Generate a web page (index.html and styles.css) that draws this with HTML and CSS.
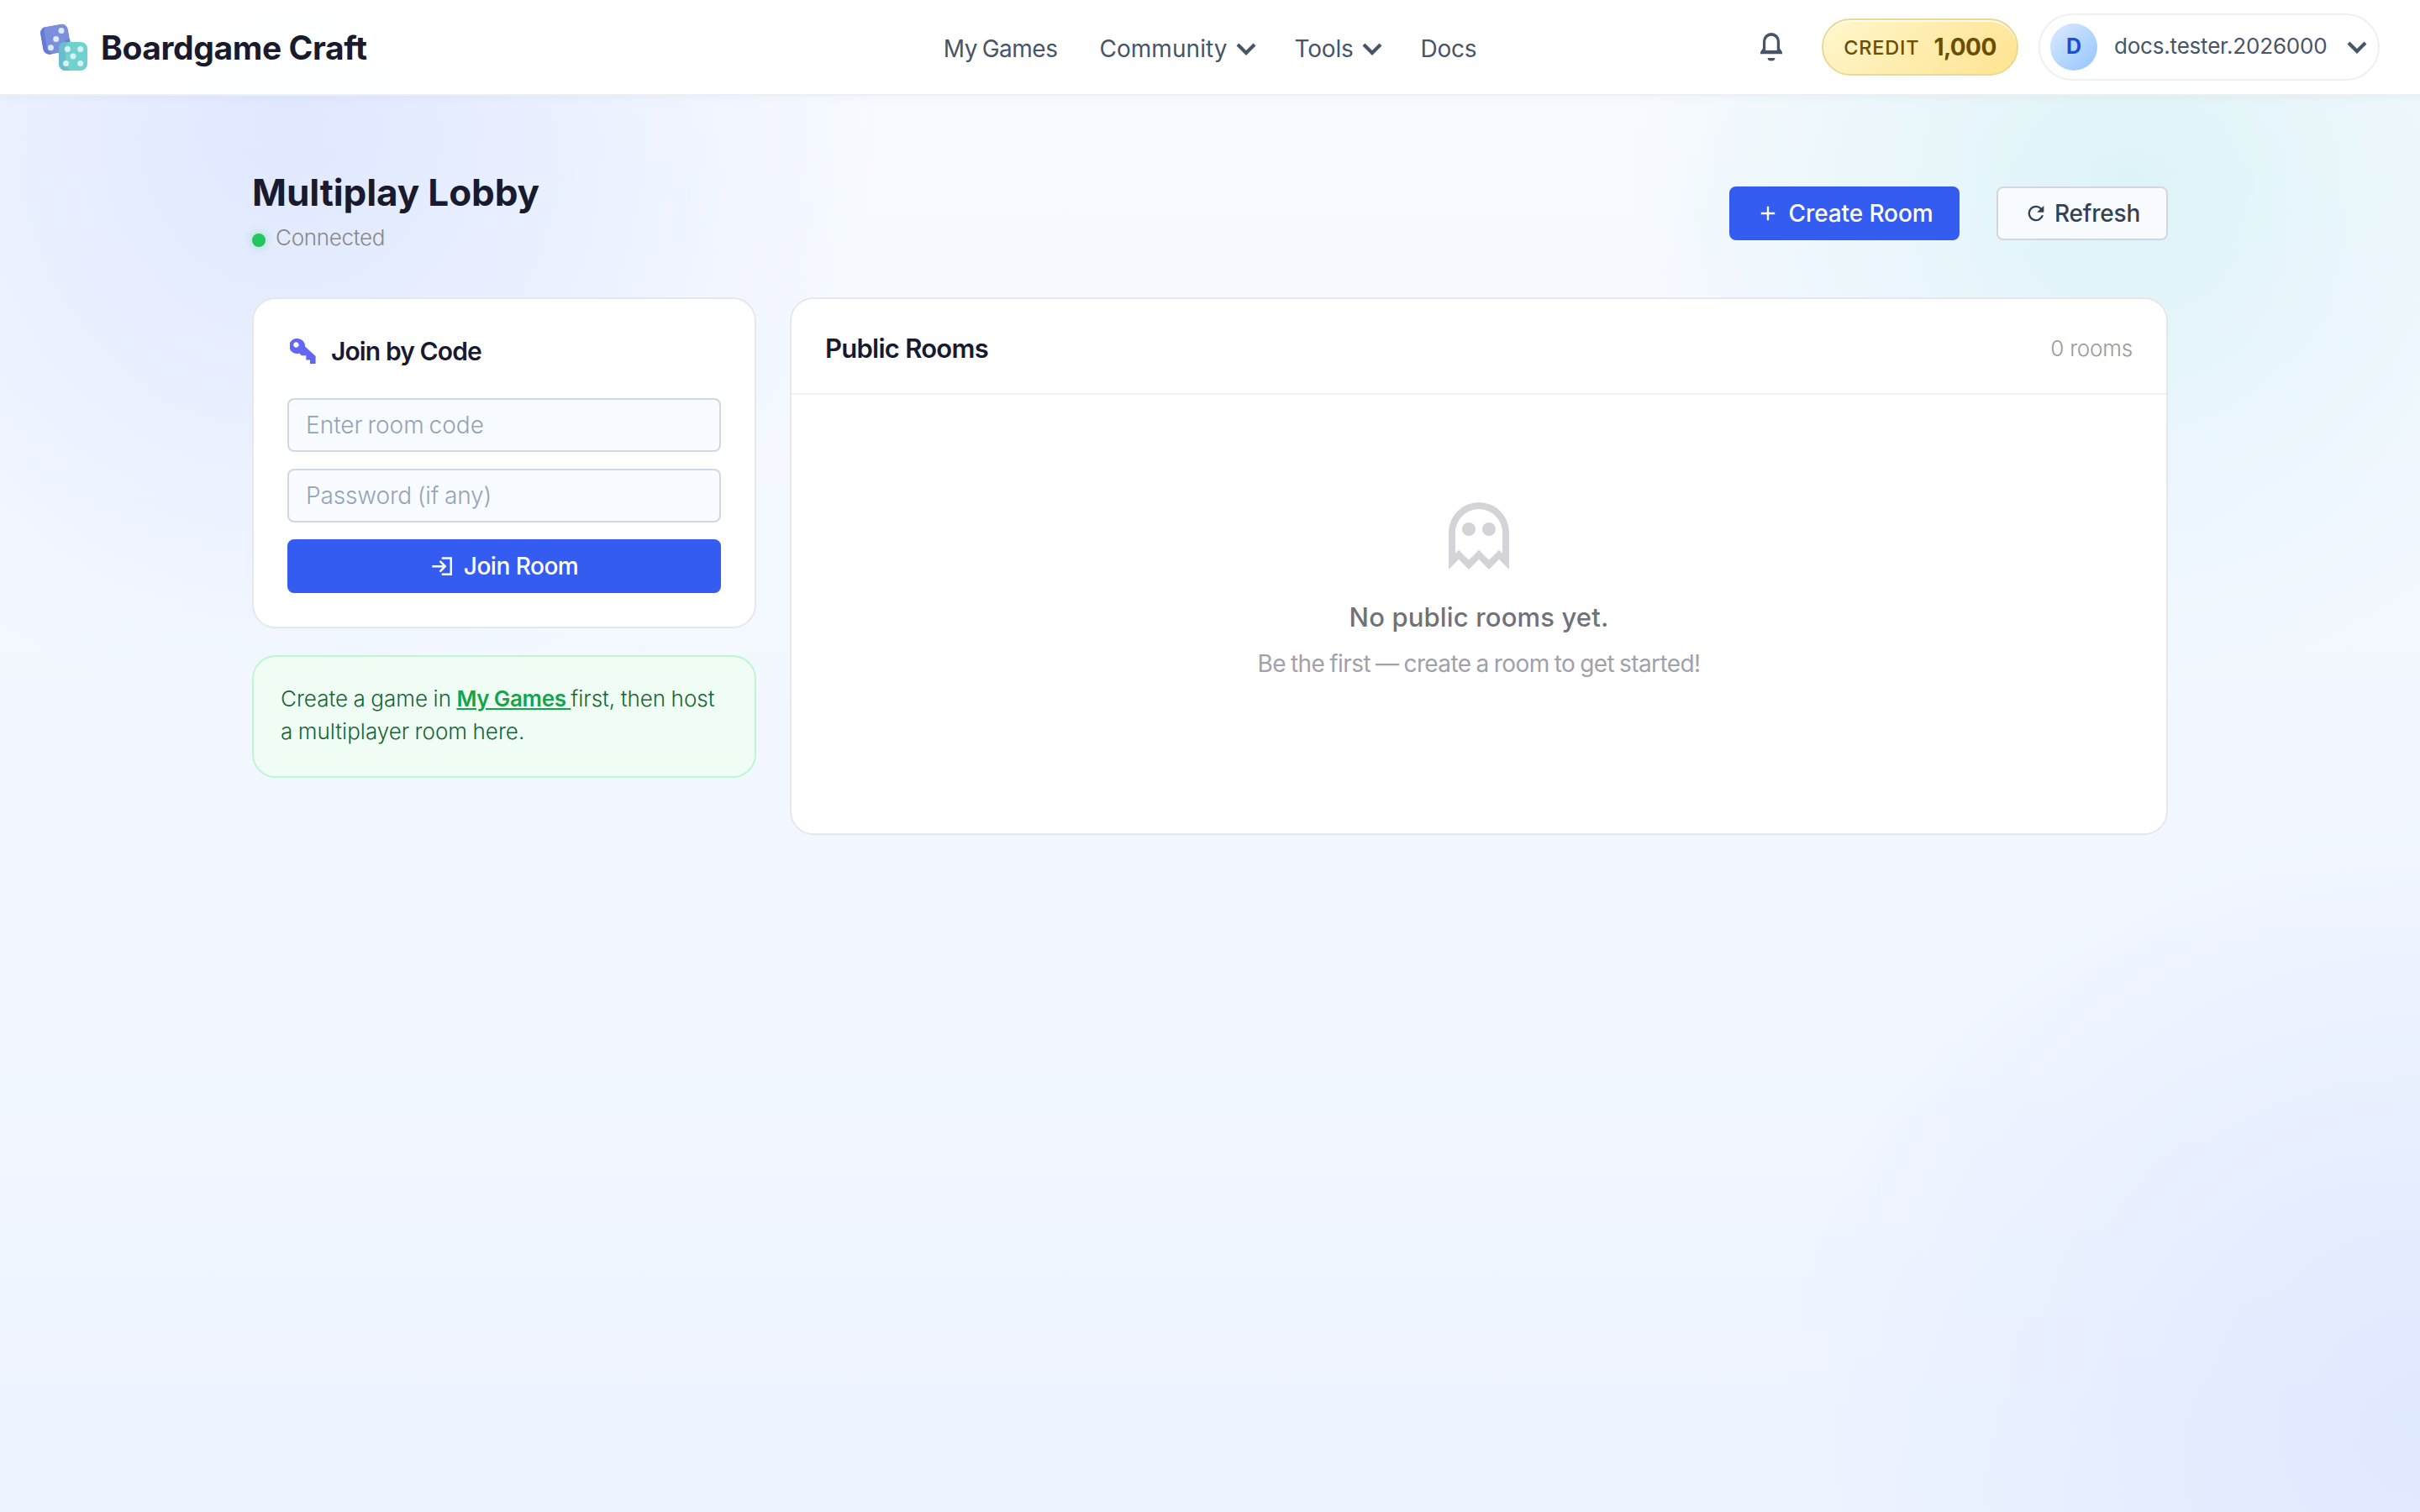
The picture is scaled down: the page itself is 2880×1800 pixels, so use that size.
FILE: index.html
```html
<!DOCTYPE html>
<html lang="en">
<head>
    <meta charset="UTF-8">
    <meta name="viewport" content="width=device-width, initial-scale=1.0">
    <title>Multiplay Lobby - Boardgame Craft</title>
    <link rel="stylesheet" href="styles.css">
</head>
<body>

<header class="navbar">
    <a href="#" class="brand">
        <svg class="brand-logo" viewBox="0 0 56 56">
            <defs>
                <clipPath id="dieLeft"><rect x="1.4" y="2" width="33.4" height="33.4" rx="8"/></clipPath>
                <clipPath id="dieRight"><rect x="22" y="22" width="34" height="34" rx="8"/></clipPath>
            </defs>
            <g transform="rotate(-10 18.1 18.7)" clip-path="url(#dieLeft)">
                <rect x="1.4" y="2" width="33.4" height="33.4" fill="#7b8fdd"/>
                <path d="M1.4 2h6.6q-1.6 3-1.6 8v14q0 8 6 11.4H1.4z" fill="#667bd6"/>
                <circle cx="36" cy="38" r="17" fill="#6a7fd6"/>
            </g>
            <g fill="#dcebf7">
                <circle cx="25" cy="8.4" r="3.5"/>
                <circle cx="18.7" cy="18.5" r="3.5"/>
                <circle cx="12.4" cy="28.7" r="3.5"/>
            </g>
            <g clip-path="url(#dieRight)">
                <rect x="22" y="22" width="34" height="34" fill="#6fd2cc"/>
                <path d="M22 22h11q-3 3-3 9v14q0 7 6 11H22z" fill="#6cbccd"/>
            </g>
            <g fill="#d8f1f5">
                <circle cx="32.3" cy="30.4" r="3.5"/>
                <circle cx="47.7" cy="30.4" r="3.5"/>
                <circle cx="39" cy="39" r="3.5"/>
                <circle cx="30.5" cy="47.6" r="3.5"/>
                <circle cx="47.7" cy="47.6" r="3.5"/>
            </g>
        </svg>
        <span class="brand-name">Boardgame Craft</span>
    </a>

    <nav class="nav">
        <a href="#" class="nav-link nav-games">My Games</a>
        <a href="#" class="nav-link nav-community">Community
            <svg class="chevron" viewBox="0 0 28 28"><path d="M4 9l10 10L24 9"/></svg>
        </a>
        <a href="#" class="nav-link nav-tools">Tools
            <svg class="chevron" viewBox="0 0 28 28"><path d="M4 9l10 10L24 9"/></svg>
        </a>
        <a href="#" class="nav-link nav-docs">Docs</a>
    </nav>

    <div class="account">
        <svg class="bell" viewBox="0 0 26 34">
            <path fill-rule="evenodd" d="M13 0a10 10 0 0 1 10 10v8.500l3 4.500v2.300H0V23l3-4.500V10A10 10 0 0 1 13 0zM13 3.800A6.800 6.800 0 0 0 6.200 10.600V21h13.600V10.600A6.800 6.800 0 0 0 13 3.800z"/>
            <path d="M8.600 30h8.800a4.400 3.600 0 0 1-8.800 0z"/>
        </svg>
        <div class="credit">
            <span class="credit-label">CREDIT</span>
            <span class="credit-value">1,000</span>
        </div>
        <div class="user">
            <span class="avatar">D</span>
            <span class="user-name">docs.tester.2026000</span>
            <svg class="chevron" viewBox="0 0 28 28"><path d="M4 9l10 10L24 9"/></svg>
        </div>
    </div>
</header>

<main class="lobby">
    <div class="lobby-head">
        <div class="lobby-title">
            <h1>Multiplay Lobby</h1>
            <div class="status"><span class="dot"></span>Connected</div>
        </div>
        <div class="actions">
            <button class="button button-primary button-create">
                <svg class="icon" viewBox="0 0 24 24"><path d="M11 11V5h2v6h6v2h-6v6h-2v-6H5v-2z"/></svg>
                Create Room
            </button>
            <button class="button button-refresh">
                <svg class="icon" viewBox="0 0 24 24"><path d="M17.650 6.350A7.960 7.960 0 0 0 12 4a8 8 0 1 0 7.730 10h-2.080A6 6 0 1 1 12 6c1.660 0 3.140.69 4.220 1.780L13 11h7V4z"/></svg>
                Refresh
            </button>
        </div>
    </div>

    <div class="lobby-grid">
        <aside class="side">
            <section class="card join">
                <h2>
                    <svg class="key" viewBox="0 0 31 30">
                        <path fill-rule="evenodd" d="M9 0a9 9 0 0 1 9 9.500L30.600 21v9H24v-4.600h-4.700v-5.100H14L11 17.500A9 9 0 1 1 9 0zM7.400 4.300a3.200 3.200 0 1 0 .01 0z"/>
                    </svg>
                    Join by Code
                </h2>
                <input type="text" class="field field-code" placeholder="Enter room code">
                <input type="text" class="field field-password" placeholder="Password (if any)">
                <button class="button button-primary button-join">
                    <svg class="icon icon-line" viewBox="0 0 28 28"><path d="M13.800 4.500h10.900v19.300H13.800M2.300 14.200h15.500M11.500 7.800l6.300 6.400-6.300 6.400"/></svg>
                    Join Room
                </button>
            </section>

            <p class="tip">Create a game in <a href="#">My Games </a>first, then host a multiplayer room here.</p>
        </aside>

        <section class="card rooms">
            <div class="rooms-head">
                <h2>Public Rooms</h2>
                <span class="rooms-count">0 rooms</span>
            </div>
            <div class="empty">
                <svg class="ghost" viewBox="0 0 24 24">
                    <path fill-rule="evenodd" d="M12 2a9 9 0 0 1 9 9v11l-3-3-3 3-3-3-3 3-3-3-3 3V11a9 9 0 0 1 9-9zm0 2a7 7 0 0 0-7 7v6.170l1-1 3 3 3-3 3 3 3-3 1 1V11a7 7 0 0 0-7-7z"/>
                    <circle cx="9" cy="10" r="2"/>
                    <circle cx="15" cy="10" r="2"/>
                </svg>
                <p class="empty-title">No public rooms yet.</p>
                <p class="empty-text">Be the first — create a room to get started!</p>
            </div>
        </section>
    </div>
</main>

</body>
</html>
```
FILE: styles.css
```css
* {
    box-sizing: border-box;
}

body {
    margin: 0;
    min-height: 100vh;
    font-family: 'Inter', sans-serif;
    font-size: 28px;
    color: #1a1a2e;
    background:
        radial-gradient(circle at 12% 8%, rgba(90, 125, 255, 0.15), transparent 700px),
        radial-gradient(circle at 88% 12%, rgba(45, 195, 185, 0.12), transparent 600px),
        radial-gradient(circle at 100% 94%, rgba(85, 125, 250, 0.1), transparent 760px),
        linear-gradient(180deg, #f8fbff 0%, #eef4ff 100%);
}

a {
    color: inherit;
    text-decoration: none;
}

h1, h2, p {
    margin: 0;
}

/* Navbar */
.navbar {
    display: grid;
    grid-template-columns: 1fr auto 1fr;
    align-items: center;
    height: 114px;
    padding: 0 48px;
    background: rgba(255, 255, 255, 0.97);
    border-bottom: 2px solid #eeeff1;
    box-shadow: 0 2px 12px rgba(15, 23, 42, 0.04);
}

.brand {
    display: flex;
    align-items: center;
    gap: 16px;
}

.brand-logo {
    width: 56px;
    height: 56px;
}

.brand-name {
    font-size: 39px;
    font-weight: 650;
    letter-spacing: -0.4px;
}

.nav {
    display: flex;
    gap: 44px;
    padding-top: 4px;
    color: #475569;
}

.nav-link {
    display: flex;
    align-items: center;
    gap: 8px;
    font-weight: 440;
}

.nav-games {
    margin-right: 6px;
    letter-spacing: -0.5px;
    word-spacing: -1.7px;
}

.nav-community {
    letter-spacing: 0.05px;
}

.nav-tools {
    letter-spacing: -0.2px;
}

.nav-docs {
    letter-spacing: -0.3px;
}

.chevron {
    width: 28px;
    height: 28px;
    fill: none;
    stroke: #475569;
    stroke-width: 4.2;
}

.account {
    display: flex;
    justify-content: flex-end;
    align-items: center;
    color: #475569;
}

.bell {
    width: 26px;
    height: 34px;
    margin-right: 47px;
    fill: #475569;
}

.credit {
    display: flex;
    align-items: center;
    justify-content: center;
    gap: 17px;
    width: 234px;
    height: 68px;
    margin-right: 24px;
    color: #6b4e00;
    background: linear-gradient(135deg, #fff7cc, #ffe391);
    border: 2px solid #ead893;
    border-radius: 34px;
    box-shadow: inset 0 2px 0 rgba(255, 255, 255, 0.8);
}

.credit-label {
    font-size: 23.5px;
    font-weight: 550;
    letter-spacing: 0.8px;
}

.credit-value {
    font-size: 28px;
    font-weight: 700;
    letter-spacing: -0.6px;
}

.user {
    display: flex;
    align-items: center;
    width: 406px;
    height: 80px;
    padding-left: 12px;
    border: 2px solid #eef0f1;
    border-radius: 40px;
    background: rgba(255, 255, 255, 0.8);
}

.avatar {
    width: 56px;
    height: 56px;
    margin-right: 20px;
    font-size: 25px;
    font-weight: 700;
    line-height: 54px;
    text-align: center;
    color: #1d4ed8;
    background: linear-gradient(135deg, #dbeafe, #93c5fd);
    border-radius: 50%;
}

.user-name {
    width: 275px;
    font-size: 26px;
    letter-spacing: -0.2px;
    line-height: 54px;
    margin-top: -2px;
}

/* Lobby */
.lobby {
    width: 2280px;
    margin: 0 auto;
    padding-top: 88px;
}

.lobby-head {
    display: flex;
    justify-content: space-between;
    align-items: center;
    height: 104px;
    margin-bottom: 48px;
}

.lobby-title {
    padding-bottom: 3px;
}

h1 {
    height: 52px;
    font-size: 44px;
    font-weight: 650;
    line-height: 52px;
    letter-spacing: -0.1px;
}

.status {
    display: flex;
    align-items: center;
    gap: 12px;
    height: 40px;
    margin-top: 8px;
    font-size: 26px;
    font-weight: 350;
    letter-spacing: -0.3px;
    color: #888;
}

.dot {
    width: 16px;
    height: 16px;
    margin-top: 6px;
    background: #22c55e;
    border-radius: 50%;
    box-shadow: 0 0 12px rgba(34, 197, 94, 0.4);
}

.actions {
    display: flex;
    gap: 44px;
}

.button {
    display: flex;
    align-items: center;
    justify-content: center;
    height: 64px;
    font-family: inherit;
    font-size: 28px;
    font-weight: 450;
    color: #334155;
    background: #f8fbff;
    border: 2px solid #d2d6e1;
    border-radius: 8px;
    cursor: pointer;
}

.button-primary {
    color: #fff;
    background: #355cf1;
    border-color: #355cf1;
}

.button-create {
    gap: 11px;
    width: 274px;
    letter-spacing: -0.1px;
}

.button-refresh {
    gap: 8px;
    width: 204px;
    letter-spacing: -0.2px;
}

.button-join {
    gap: 12px;
    width: 100%;
    letter-spacing: -0.5px;
}

.icon {
    width: 28px;
    height: 28px;
    fill: currentColor;
}

.icon-line {
    fill: none;
    stroke: currentColor;
    stroke-width: 2.4;
}

.lobby-grid {
    display: grid;
    grid-template-columns: 600px 1fr;
    gap: 40px;
    align-items: start;
}

.card {
    background: #fff;
    border: 2px solid #e5e7eb;
    border-radius: 28px;
}

.side {
    display: grid;
    gap: 32px;
}

.join {
    display: grid;
    gap: 20px;
    padding: 40px;
}

.join h2 {
    display: flex;
    align-items: center;
    gap: 18px;
    height: 44px;
    margin-bottom: 14px;
    padding-left: 3px;
    font-size: 30px;
    font-weight: 600;
    letter-spacing: -0.9px;
}

.key {
    width: 31px;
    height: 30px;
    fill: #6366f1;
}

.field {
    width: 100%;
    height: 64px;
    padding: 0 20px;
    font-family: inherit;
    font-size: 28px;
    font-weight: 350;
    background: #f8fbff;
    border: 2px solid #d2d6e1;
    border-radius: 8px;
}

.field::placeholder {
    color: #94a3b8;
}

.field-code {
    letter-spacing: 0;
    word-spacing: -2px;
}

.field-password {
    letter-spacing: -0.15px;
    word-spacing: -1px;
}

.tip {
    height: 146px;
    padding: 31px 40px 31px 32px;
    font-size: 26px;
    font-weight: 350;
    line-height: 38.5px;
    letter-spacing: 0;
    word-spacing: -0.8px;
    color: #166534;
    background: #f0fdf4;
    border: 2px solid #bbf7d0;
    border-radius: 28px;
}

.tip a {
    font-weight: 600;
    letter-spacing: -0.3px;
    color: #16a34a;
    text-decoration: underline;
}

.rooms-head {
    display: flex;
    justify-content: space-between;
    align-items: center;
    height: 114px;
    padding: 5px 40px 0;
    border-bottom: 2px solid #f0f0f5;
}

.rooms-head h2 {
    font-size: 31px;
    font-weight: 600;
    letter-spacing: -0.75px;
}

.rooms-count {
    font-size: 26px;
    font-weight: 350;
    letter-spacing: -0.2px;
    color: #999;
}

.empty {
    display: flex;
    flex-direction: column;
    align-items: center;
    height: 522px;
    padding-top: 120px;
}

.ghost {
    width: 96px;
    height: 96px;
    fill: #d4d4d8;
}

.empty-title {
    margin-top: 25px;
    font-size: 31px;
    font-weight: 540;
    line-height: 48px;
    letter-spacing: 0.15px;
    color: #71717a;
}

.empty-text {
    margin-top: 11px;
    font-size: 28px;
    font-weight: 370;
    line-height: 40px;
    letter-spacing: -0.6px;
    word-spacing: -1.2px;
    color: #a1a1aa;
}
```
